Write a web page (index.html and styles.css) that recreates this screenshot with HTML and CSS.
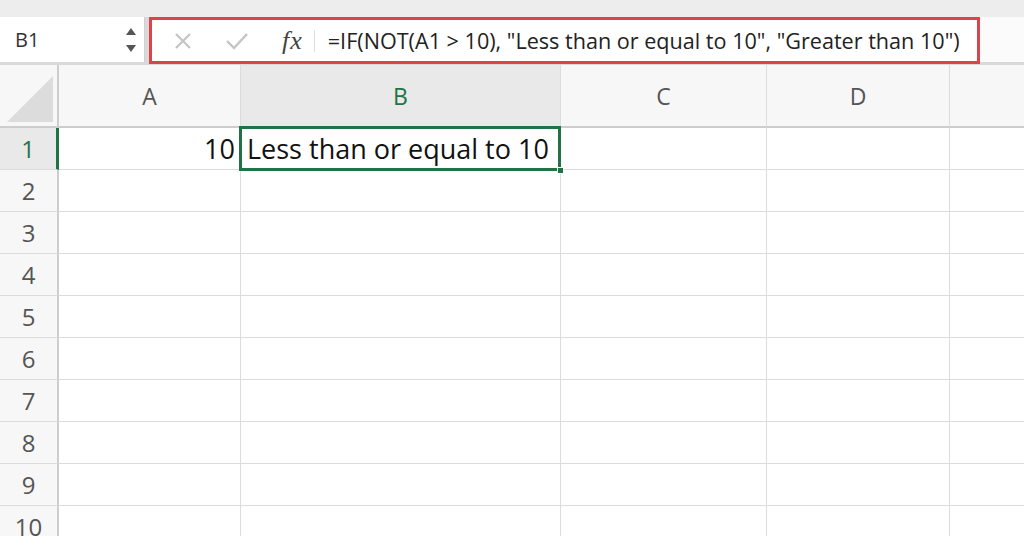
FILE: index.html
```html
<!DOCTYPE html>
<html>
<head>
<meta charset="utf-8">
<link rel="stylesheet" href="styles.css">
</head>
<body>
<div class="topstrip"></div>
<div class="formulabar">
  <div class="namebox">
    <span class="cellref">B1</span>
    <svg class="spinner" width="12" height="26" viewBox="0 0 12 26"><path d="M1 8 L6 1 L11 8 Z" fill="#555"/><path d="M1 18 L6 25 L11 18 Z" fill="#555"/></svg>
  </div>
  <div class="fbox">
    <svg class="ico-x" width="18" height="18" viewBox="0 0 18 18"><path d="M2 2 L16 16 M16 2 L2 16" stroke="#c4c4c4" stroke-width="2.2" fill="none"/></svg>
    <svg class="ico-check" width="24" height="18" viewBox="0 0 24 18"><path d="M2 9 L9 16 L22 2" stroke="#c4c4c4" stroke-width="2.4" fill="none"/></svg>
    <span class="fx">fx</span>
    <span class="sep"></span>
    <span class="ftext">=IF(NOT(A1 &gt; 10), "Less than or equal to 10", "Greater than 10")</span>
  </div>
  <div class="fill"></div>
</div>
<div class="sheet">
  <div class="hd corner"><span class="tri"></span></div>
  <div class="hd col">A</div>
  <div class="hd col sel">B</div>
  <div class="hd col">C</div>
  <div class="hd col">D</div>
  <div class="hd col last"></div>

  <div class="rh sel">1</div>
  <div class="c num">10</div>
  <div class="c active">Less than or equal to 10<span class="handle"></span></div>
  <div class="c"></div><div class="c"></div><div class="c last"></div>

  <div class="rh">2</div><div class="c"></div><div class="c"></div><div class="c"></div><div class="c"></div><div class="c last"></div>
  <div class="rh">3</div><div class="c"></div><div class="c"></div><div class="c"></div><div class="c"></div><div class="c last"></div>
  <div class="rh">4</div><div class="c"></div><div class="c"></div><div class="c"></div><div class="c"></div><div class="c last"></div>
  <div class="rh">5</div><div class="c"></div><div class="c"></div><div class="c"></div><div class="c"></div><div class="c last"></div>
  <div class="rh">6</div><div class="c"></div><div class="c"></div><div class="c"></div><div class="c"></div><div class="c last"></div>
  <div class="rh">7</div><div class="c"></div><div class="c"></div><div class="c"></div><div class="c"></div><div class="c last"></div>
  <div class="rh">8</div><div class="c"></div><div class="c"></div><div class="c"></div><div class="c"></div><div class="c last"></div>
  <div class="rh">9</div><div class="c"></div><div class="c"></div><div class="c"></div><div class="c"></div><div class="c last"></div>
  <div class="rh">10</div><div class="c"></div><div class="c"></div><div class="c"></div><div class="c"></div><div class="c last"></div>
</div>
</body>
</html>
```

FILE: styles.css
```css
* { box-sizing: border-box; }
html, body { margin: 0; padding: 0; }
body {
  width: 1024px;
  height: 536px;
  overflow: hidden;
  background: #ffffff;
  font-family: "Open Sans", Lato, sans-serif;
}
.topstrip {
  height: 17px;
  background: #ededed;
}
.formulabar {
  display: flex;
  align-items: flex-start;
  height: 48px;
  background: #d9d9d9;
}
.namebox {
  width: 145px;
  height: 45px;
  background: #fff;
  display: flex;
  align-items: center;
  justify-content: space-between;
  padding: 0 7px 0 15px;
  border-right: 1px solid #cfcfcf;
}
.cellref {
  font-size: 20px;
  color: #333;
}
.spinner { display: block; }
.fbox {
  margin-left: 4px;
  width: 831px;
  height: 47px;
  border: 3px solid #d9454a;
  background: #fff;
  display: flex;
  align-items: center;
}
.ico-x { margin-left: 22px; }
.ico-check { margin-left: 33px; }
.fx {
  margin-left: 33px;
  font-family: "Liberation Serif", "DejaVu Serif", serif;
  font-style: italic;
  font-size: 26px;
  color: #444;
  letter-spacing: 1px;
}
.sep {
  width: 1px;
  height: 22px;
  background: #dedede;
  margin-left: 11px;
}
.ftext {
  margin-left: 13px;
  font-size: 21.6px;
  color: #222;
  white-space: nowrap;
}
.fill {
  flex: 1;
  height: 45px;
  background: #fbfbfb;
}
.sheet {
  display: grid;
  grid-template-columns: 59px 182px 320px 206px 183px 1fr;
  grid-template-rows: 63px repeat(10, 42px);
}
.hd {
  background: #f7f7f7;
  border-right: 1px solid #dcdcdc;
  border-bottom: 2px solid #cdcdcd;
  display: flex;
  align-items: center;
  justify-content: center;
  font-size: 23px;
  color: #555;
}
.hd.sel {
  background: #e9e9e9;
  color: #217346;
}
.hd.last { border-right: none; }
.corner {
  position: relative;
  border-right: 2px solid #cdcdcd;
}
.tri {
  position: absolute;
  right: 4px;
  bottom: 4px;
  width: 0;
  height: 0;
  border-left: 46px solid transparent;
  border-bottom: 46px solid #dcdcdc;
}
.rh {
  background: #f7f7f7;
  border-right: 2px solid #cdcdcd;
  border-bottom: 1px solid #dcdcdc;
  display: flex;
  align-items: center;
  justify-content: center;
  font-size: 24px;
  color: #555;
}
.rh.sel {
  background: #e9e9e9;
  color: #217346;
  border-right: 3px solid #217346;
}
.c {
  border-right: 1px solid #dcdcdc;
  border-bottom: 1px solid #dcdcdc;
  font-size: 27px;
  color: #111;
  display: flex;
  align-items: center;
  white-space: nowrap;
}
.c.last { border-right: none; }
.c.num {
  justify-content: flex-end;
  padding-right: 5px;
}
.c.active {
  position: relative;
  padding-left: 6px;
}
.c.active::after {
  content: "";
  position: absolute;
  left: -2px;
  top: -2px;
  right: -1px;
  bottom: -2px;
  border: 3px solid #217346;
  pointer-events: none;
}
.handle {
  position: absolute;
  right: -4px;
  bottom: -5px;
  width: 7px;
  height: 7px;
  background: #217346;
  border: 1px solid #fff;
  z-index: 2;
}
```
